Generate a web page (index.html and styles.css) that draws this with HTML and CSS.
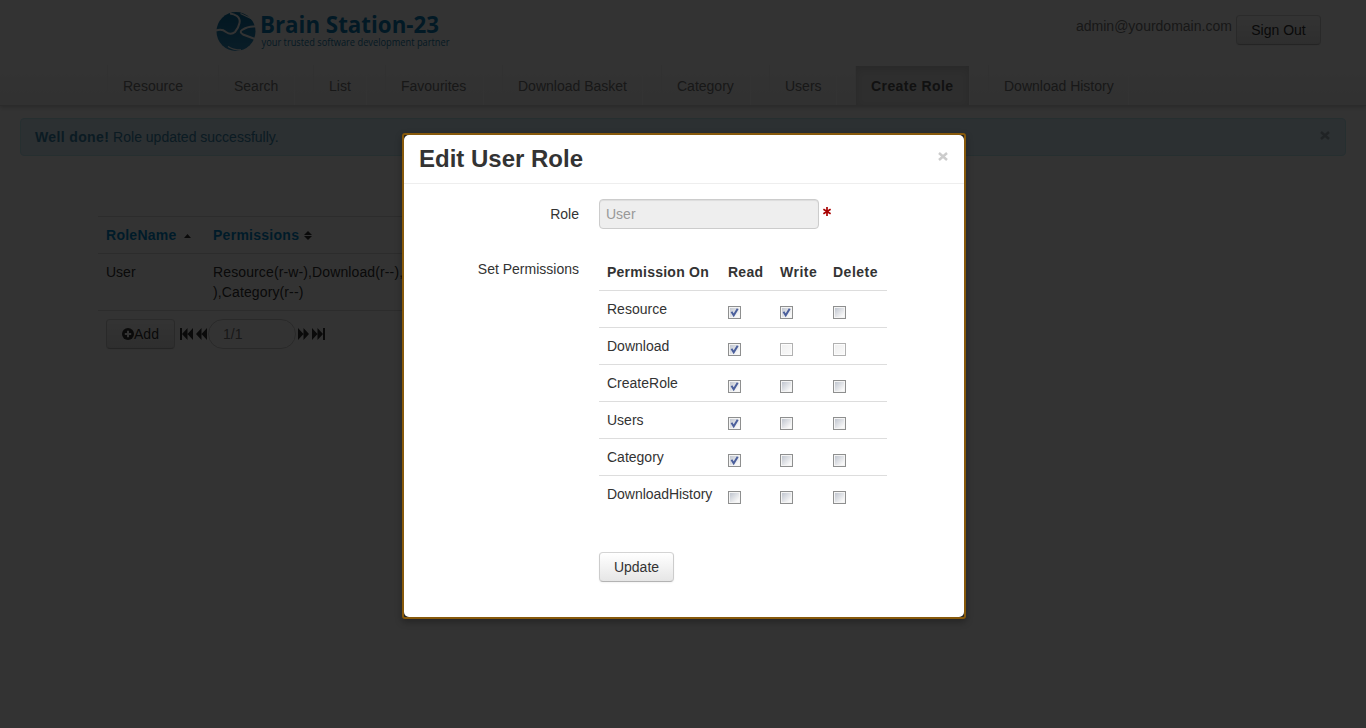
FILE: index.html
```html
<!DOCTYPE html>
<html lang="en">
<head>
<meta charset="utf-8">
<title>Brain Station-23</title>
<link rel="stylesheet" href="styles.css">
</head>
<body>
<svg class="defs" aria-hidden="true">
  <symbol id="prev" viewBox="0 0 11 12"><path d="M5.500 0v12L0 6zM11 0v12L5.500 6z"/></symbol>
  <symbol id="tick" viewBox="0 0 13 13"><path d="M3.500 5.800 5.700 9.300 9.700 2.700" fill="none" stroke="#4b5f9c" stroke-width="2"/></symbol>
</svg>
<div class="page">
  <header class="header">
    <svg class="logo" width="236" height="44" viewBox="0 0 236 44">
      <defs><linearGradient id="globe" x1="0" y1="0" x2="0" y2="1"><stop offset="0" stop-color="#0870a4"/><stop offset="1" stop-color="#3090c4"/></linearGradient></defs>
      <ellipse cx="20" cy="23.500" rx="19.500" ry="19.500" fill="url(#globe)"/>
      <g fill="none" stroke="#fff" stroke-width="2">
        <path d="M0 22.500Q6 20.500 10 24Q15 27.500 19 24Q22.500 20 23.500 15Q24.500 11 21 8Q18 6 14 5.500"/>
        <path d="M39 31L27 26.500Q23 24 26 22Q32 18 39 18.500"/>
        <path d="M24.500 5.500L36 11M12 38.500Q17 42 25 42" stroke-width="1.300"/>
      </g>
      <text class="logo-name" x="44" y="25" textLength="179" lengthAdjust="spacingAndGlyphs">Brain Station-23</text>
      <text class="logo-tag" x="45.500" y="37.500" textLength="188" lengthAdjust="spacingAndGlyphs">your trusted software development partner</text>
    </svg>
    <div class="account"><span class="email">admin@yourdomain.com</span><button class="btn signout">Sign Out</button></div>
  </header>
  <nav class="nav">
    <a>Resource</a><a>Search</a><a>List</a><a>Favourites</a><a>Download Basket</a><a>Category</a><a>Users</a><a class="active">Create Role</a><a>Download History</a>
  </nav>
  <div class="alert"><span><b>Well done!</b> Role updated successfully.</span><svg class="close alert-close" width="10" height="9" viewBox="0 0 10 9"><path d="M1 1l8 7M9 1l-8 7"/></svg></div>
  <main class="roles">
    <div class="role-row role-head">
      <span>RoleName <svg class="sort up" width="7" height="4" viewBox="0 0 7 4"><path d="M3.500 0 7 4H0z"/></svg></span>
      <span>Permissions <svg class="sort" width="8" height="9" viewBox="0 0 8 9"><path d="M4 0 8 4H0zM0 5h8L4 9z"/></svg></span>
    </div>
    <div class="role-row"><span>User</span><span class="granted">Resource(r-w-),Download(r--),<br>),Category(r--)</span></div>
    <div class="role-row pager">
      <button class="btn add"><svg width="12" height="12" viewBox="0 0 12 12"><circle cx="6" cy="6" r="6"/><path d="M6 2.800v6.400M2.800 6h6.400" stroke="#fff" stroke-width="2"/></svg>Add</button>
      <svg class="first" width="13" height="12"><path d="M0 0h2v12H0z"/><use href="#prev" x="2" width="11" height="12"/></svg>
      <svg class="prev" width="11" height="12"><use href="#prev" width="11" height="12"/></svg>
      <span class="page-no">1/1</span>
      <svg class="next" width="11" height="12"><use href="#prev" width="11" height="12"/></svg>
      <svg class="last" width="13" height="12"><path d="M0 0h2v12H0z"/><use href="#prev" x="2" width="11" height="12"/></svg>
    </div>
  </main>
</div>
<div class="backdrop">
  <section class="modal">
    <div class="modal-content">
      <div class="modal-header"><h3>Edit User Role</h3><svg class="close" width="10" height="9" viewBox="0 0 10 9"><path d="M1 1l8 7M9 1l-8 7"/></svg></div>
      <div class="form">
        <label>Role</label>
        <div class="field"><span class="input">User</span><svg width="8" height="9" viewBox="0 0 8 9"><path d="M4 0v9M.4 2.200l7.200 4.600M7.600 2.200.4 6.800" stroke="#a80000" stroke-width="1.700"/></svg></div>
        <label class="set-label">Set Permissions</label>
        <div class="perms">
          <div class="perm head"><span>Permission On</span><span>Read</span><span>Write</span><span>Delete</span></div>
          <div class="perm"><span>Resource</span><i class="box"><svg><use href="#tick"/></svg></i><i class="box"><svg><use href="#tick"/></svg></i><i class="box"></i></div>
          <div class="perm"><span>Download</span><i class="box"><svg><use href="#tick"/></svg></i><i class="box off"></i><i class="box off"></i></div>
          <div class="perm"><span>CreateRole</span><i class="box"><svg><use href="#tick"/></svg></i><i class="box"></i><i class="box"></i></div>
          <div class="perm"><span>Users</span><i class="box"><svg><use href="#tick"/></svg></i><i class="box"></i><i class="box"></i></div>
          <div class="perm"><span>Category</span><i class="box"><svg><use href="#tick"/></svg></i><i class="box"></i><i class="box"></i></div>
          <div class="perm"><span class="long">DownloadHistory</span><i class="box"></i><i class="box"></i><i class="box"></i></div>
        </div>
        <button class="btn update">Update</button>
      </div>
    </div>
  </section>
</div>
</body>
</html>
```

FILE: styles.css
```css
* { box-sizing: border-box; }
body { margin: 0; height: 728px; overflow: hidden; background: #fff; color: #333; font: 14px/20px "Liberation Sans", Arial, sans-serif; }
svg { display: block; flex: none; }
b { letter-spacing: .37px; }
.defs { position: absolute; width: 0; height: 0; }
.page { height: 728px; overflow: hidden; }
.header { height: 65px; display: flex; justify-content: space-between; padding: 8px 45px 0 216px; }
.logo { overflow: visible; }
.logo-name { font: bold 23px "Open Sans", sans-serif; fill: #0a7fb8; }
.logo-tag { font: 10px "Open Sans", sans-serif; fill: #1c7fae; }
.account { display: flex; align-items: flex-start; color: #777; padding-top: 7px; }
.email { width: 160px; margin-top: 1px; }
.btn { font: inherit; color: #333; height: 30px; padding: 0; display: flex; align-items: center; justify-content: center; border: 1px solid #ccc; border-color: #d4d4d4 #ccc #b3b3b3; border-radius: 4px; background: linear-gradient(#fff, #e6e6e6); box-shadow: 0 1px 2px rgba(0,0,0,.05); }
.signout { width: 85px; }
.nav { height: 41px; display: grid; grid-template-columns: 93px 77px 54px 99px 141px 90px 68px 115px 141px; column-gap: 18px; padding-left: 107px; background: linear-gradient(#fff, #f2f2f2); border-bottom: 1px solid #d4d4d4; box-shadow: 0 1px 5px rgba(0,0,0,.25); clip-path: inset(0 0 -10px); color: #777; }
.nav a { padding: 11px 0 9px 15px; white-space: nowrap; border: 1px solid; border-width: 0 1px; border-color: transparent #fff transparent #f2f2f2; }
.nav .active { margin-top: 1px; padding-top: 10px; color: #555; font-weight: bold; letter-spacing: .42px; background: #e5e5e5 padding-box; box-shadow: inset 0 3px 8px rgba(0,0,0,.125); }
.alert { margin: 12px 20px 0; height: 38px; padding: 8px 15px 8px 14px; display: flex; justify-content: space-between; border: 1px solid #bce8f1; border-radius: 4px; background: #d9edf7; color: #3a87ad; }
.close path { stroke: #ccc; stroke-width: 2.500; }
.alert-close { margin-top: 4px; }
.alert-close path { stroke: #9fb0b8; }
.roles { width: 600px; margin: 60px 0 0 98px; }
.role-row { display: grid; grid-template-columns: 107px 1fr; border-top: 1px solid #ddd; padding: 8px; }
.role-row > span { white-space: nowrap; }
.role-head { color: #08c; font-weight: bold; letter-spacing: .27px; }
.granted { letter-spacing: .12px; }
.sort { display: inline-block; fill: #333; margin-left: 1px; }
.up { margin-left: 3px; vertical-align: 2px; }
.pager { display: flex; align-items: center; fill: #333; }
.add { width: 69px; }
.first { margin: 0 3px 0 5px; }
.page-no { width: 88px; height: 30px; padding: 4px 14px; margin: 0 2px 0 1px; border: 1px solid #ccc; border-radius: 15px; color: #777; }
.next, .last { transform: scaleX(-1); }
.last { margin-left: 3px; }
.backdrop { position: absolute; inset: 0; background: rgba(0,0,0,.8); padding-top: 133px; }
.modal { width: 564px; height: 486px; margin-left: 402px; border: 2px solid #87590b; border-radius: 3px; background: #222; box-shadow: 0 3px 7px rgba(0,0,0,.3); }
.modal-content { height: 482px; border-radius: 5px; background: #fff; }
.modal-header { height: 49px; display: flex; justify-content: space-between; padding: 9px 16px 9px 15px; border-bottom: 1px solid #eee; }
h3 { margin: 0; font-size: 24px; line-height: 30px; white-space: nowrap; }
.modal-header .close { margin-top: 8px; }
.form { display: grid; grid-template-columns: 175px 288px; column-gap: 20px; padding-top: 15px; }
label { text-align: right; padding-top: 5px; }
.field { display: flex; gap: 4px; height: 55px; }
.field svg { margin-top: 8px; }
.input { width: 220px; height: 30px; padding: 4px 6px; border: 1px solid #ccc; border-radius: 4px; background: #eee; color: #999; box-shadow: inset 0 1px 1px rgba(0,0,0,.075); }
.perm { display: grid; grid-template-columns: 121px 52px 53px 54px; height: 37px; padding: 8px 0 0 8px; border-top: 1px solid #ddd; }
.head { height: 36px; border: 0; font-weight: bold; letter-spacing: .25px; }
.head span:nth-child(n+3) { letter-spacing: .5px; }
.long { letter-spacing: -.04px; }
.box { width: 13px; height: 13px; margin-top: 7px; border: 1px solid #8e8f8f; box-shadow: inset 0 0 0 1px #f4f4f4; background: linear-gradient(135deg, #b9bfca, #f8f8f8 80%); }
.box svg { width: 13px; height: 13px; margin: -1px; }
.off { border-color: #b1b1b1; box-shadow: inset 0 0 0 1px #fcfcfc; background: linear-gradient(135deg, #efefef, #fafafa); }
.update { grid-column: 2; width: 75px; margin-top: 40px; }
```
